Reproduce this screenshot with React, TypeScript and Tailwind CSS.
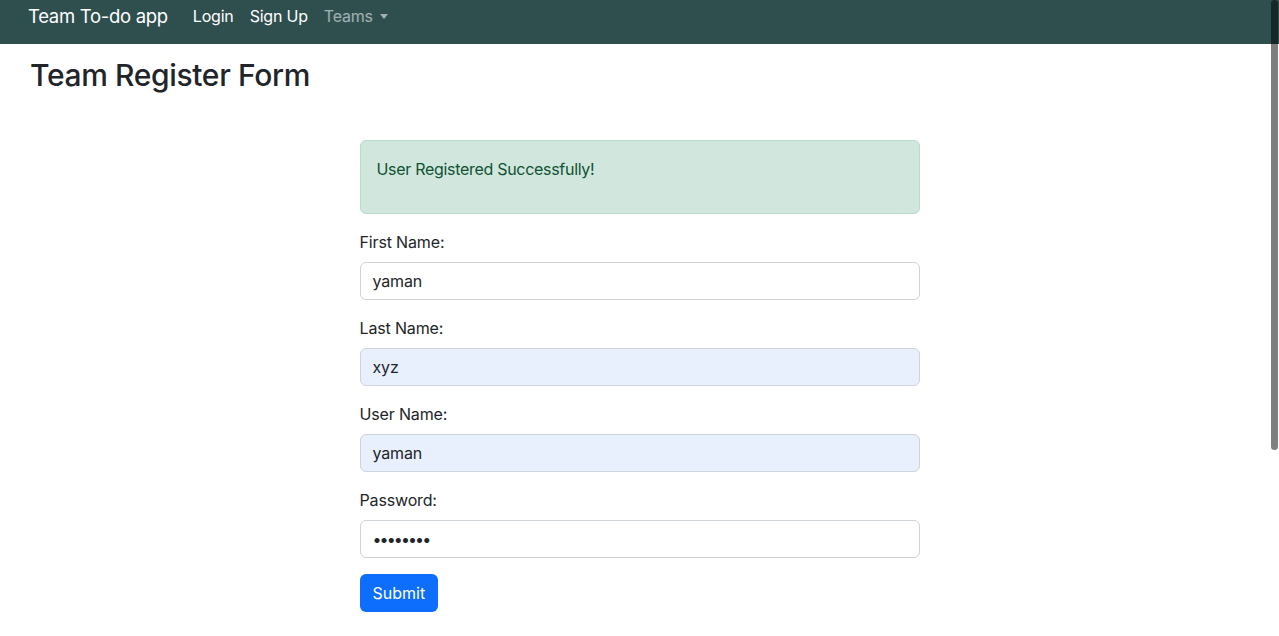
export default function App() {
  const font = { fontFamily: 'Inter, "Noto Sans", "Liberation Sans", sans-serif' };
  return (
    <div className="relative min-h-[636px] bg-white text-[16px] tracking-[-0.15px] text-[#212529]" style={font}>
      <nav className="flex h-[44px] items-start bg-[#2f4f4f] pl-[28px]">
        <span className="mr-[17px] mt-[2px] text-[18.5px] leading-[28px] text-white tracking-[-0.3px]">Team To-do app</span>
        <span className="mt-[4px] px-[8px] leading-[24px] text-white tracking-[-0.2px]">Login</span>
        <span className="mt-[4px] px-[8px] leading-[24px] text-white tracking-[-0.2px]">Sign Up</span>
        <span className="mt-[4px] flex items-center px-[8px] leading-[24px] text-white/55 tracking-[-0.2px]">
          Teams
          <span className="ml-[7px] inline-block h-0 w-0 border-x-[4.5px] border-t-[5px] border-x-transparent border-t-white/55" />
        </span>
      </nav>
      <h2 className="pl-[30px] pt-[12px] text-[30px] font-medium leading-[38px] tracking-[-0.35px]">Team Register Form</h2>
      <div className="mx-auto mt-[46px] w-[560px]">
        <div className="mb-[16px] rounded-[6px] border border-[#badbcc] bg-[#d1e7dd] px-[16px] pt-[16px] pb-[16px] text-[#0f5132]">
          <p className="mb-[16px] leading-[24px] tracking-[-0.3px]">User Registered Successfully!</p>
        </div>
        {[
          { label: 'First Name:', value: 'yaman', auto: false },
          { label: 'Last Name:', value: 'xyz', auto: true },
          { label: 'User Name:', value: 'yaman', auto: true },
          { label: 'Password:', value: '••••••••', auto: false },
        ].map((f) => (
          <div key={f.label} className="mb-[16px]">
            <div className="mb-[8px] leading-[24px]">{f.label}</div>
            <div
              className={`flex h-[38px] items-center rounded-[6px] border border-[#ced4da] px-[12px] ${f.auto ? 'bg-[#e8f0fe]' : 'bg-white'} ${f.value.startsWith('•') ? 'tracking-[-1.9px]' : ''}`}
            >
              {f.value}
            </div>
          </div>
        ))}
        <button className="h-[38px] rounded-[6px] bg-[#0d6efd] px-[13px] tracking-normal text-white">Submit</button>
      </div>
      <div className="absolute left-[1271px] top-0 h-[450px] w-[7px] rounded-full bg-black/50" />
    </div>
  );
}
